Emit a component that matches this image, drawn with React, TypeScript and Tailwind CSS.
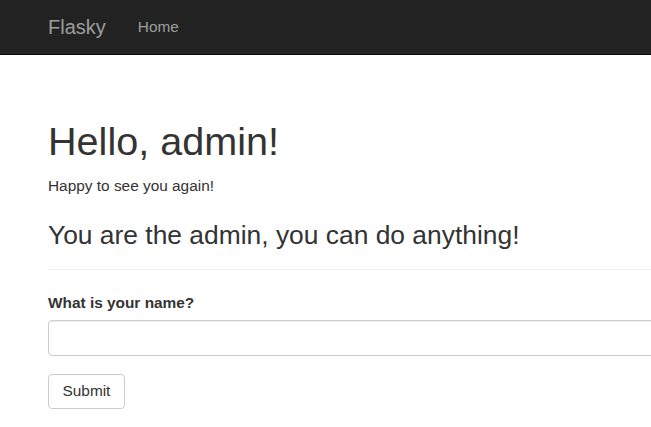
export default function App() {
  return (
    <div className="w-[651px] h-[427px] overflow-hidden bg-white text-[#333] font-['Liberation_Sans',Arial,sans-serif]">
      {/* Navbar */}
      <nav className="h-[55px] bg-[#222] border-b border-[#080808] flex items-center pl-[48px]">
        <a className="text-[20px] leading-[22px] text-[#9d9d9d]">Flasky</a>
        <a className="ml-[32px] text-[15.4px] leading-[22px] text-[#9d9d9d]">Home</a>
      </nav>

      {/* Content */}
      <div className="pl-[48px] w-[840px]">
        <div className="border-b border-[#eee] pb-[19px]">
          <h1 className="mt-[63.5px] text-[39.6px] leading-[44px]">Hello, admin!</h1>
          <p className="mt-[12px] text-[15.4px] leading-[22px]">Happy to see you again!</p>
          <h3 className="mt-[24.5px] text-[26.4px] leading-[29px]">You are the admin, you can do anything!</h3>
        </div>

        <form className="pt-[21.7px]">
          <label className="block font-bold text-[15.4px] leading-[22px]">What is your name?</label>
          <input
            type="text"
            className="block mt-[6.7px] w-full h-[36px] border border-[#ccc] rounded-[4px] shadow-[inset_0_1px_1px_rgba(0,0,0,0.075)] outline-none"
          />
          <button
            type="button"
            className="block mt-[17.6px] h-[35px] px-[13.5px] border border-[#ccc] rounded-[4px] bg-white text-[15.4px] leading-[22px] text-[#333]"
          >
            Submit
          </button>
        </form>
      </div>
    </div>
  )
}
